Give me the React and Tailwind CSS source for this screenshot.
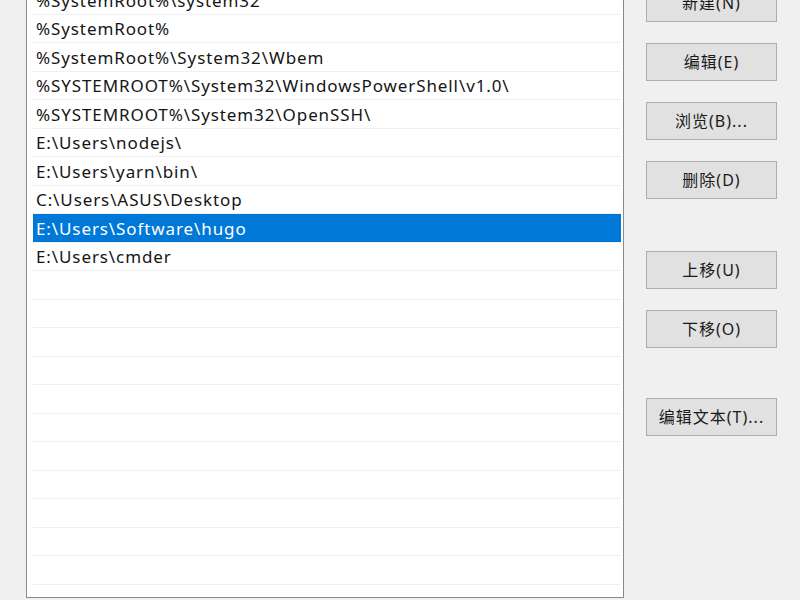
import React from "react";

const paths = [
  "%SystemRoot%\\system32",
  "%SystemRoot%",
  "%SystemRoot%\\System32\\Wbem",
  "%SYSTEMROOT%\\System32\\WindowsPowerShell\\v1.0\\",
  "%SYSTEMROOT%\\System32\\OpenSSH\\",
  "E:\\Users\\nodejs\\",
  "E:\\Users\\yarn\\bin\\",
  "C:\\Users\\ASUS\\Desktop",
  "E:\\Users\\Software\\hugo",
  "E:\\Users\\cmder",
];

const SELECTED = 8;
const TOTAL_ROWS = 22;

function Btn({ label, className = "" }) {
  return (
    <button
      className={
        "h-[38px] w-[131px] shrink-0 border border-[#adadad] bg-[#e1e1e1] text-[16px] tracking-[1px] text-[#1a1a1a] flex items-center justify-center " +
        className
      }
    >
      {label}
    </button>
  );
}

export default function App() {
  const rows = Array.from({ length: TOTAL_ROWS }, (_, i) => paths[i] ?? "");
  return (
    <div
      className="w-[800px] h-[600px] overflow-hidden bg-[#f0f0f0] flex items-start"
      style={{ fontFamily: '"Noto Sans", "Noto Sans CJK SC", sans-serif' }}
    >
      {/* path list */}
      <div className="ml-[26px] mt-[-15px] w-[598px] h-[613px] shrink-0 overflow-hidden border border-[#8a8a8a] bg-white pl-[6px] pr-[2px]">
        {rows.map((p, i) => (
          <div
            key={i}
            className={
              "h-[28.5px] flex items-center pl-[3px] pt-[1px] text-[17px] tracking-[0.9px] leading-none whitespace-nowrap border-b border-[#f0f0f0] " +
              (i === SELECTED ? "bg-[#0078d7] text-white" : "text-[#151515]")
            }
          >
            {p}
          </div>
        ))}
      </div>

      {/* action buttons */}
      <div className="ml-[22px] mt-[-16px] flex flex-col">
        <Btn label="新建(N)" />
        <Btn label="编辑(E)" className="mt-[21px]" />
        <Btn label="浏览(B)..." className="mt-[21px]" />
        <Btn label="删除(D)" className="mt-[21px]" />
        <Btn label="上移(U)" className="mt-[52px]" />
        <Btn label="下移(O)" className="mt-[21px]" />
        <Btn label="编辑文本(T)..." className="mt-[50px]" />
      </div>
    </div>
  );
}
